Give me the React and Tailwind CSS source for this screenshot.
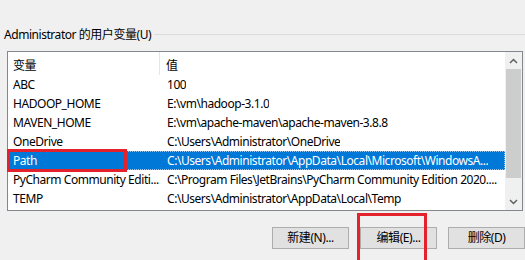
import React from 'react'

const rows = [
  ['ABC', '100'],
  ['HADOOP_HOME', 'E:\\vm\\hadoop-3.1.0'],
  ['MAVEN_HOME', 'E:\\vm\\apache-maven\\apache-maven-3.8.8'],
  ['OneDrive', 'C:\\Users\\Administrator\\OneDrive'],
  ['Path', 'C:\\Users\\Administrator\\AppData\\Local\\Microsoft\\WindowsA...'],
  ['PyCharm Community Editi...', 'C:\\Program Files\\JetBrains\\PyCharm Community Edition 2020....'],
  ['TEMP', 'C:\\Users\\Administrator\\AppData\\Local\\Temp'],
]

const Button = ({ children }) => (
  <div className="w-[77px] h-[22px] border border-[#adadad] bg-[#e1e1e1] flex items-center justify-center">
    {children}
  </div>
)

const App = () => {
  return (
    <div
      className="relative w-[525px] h-[260px] overflow-hidden bg-[#f0f0f0] text-[12px] tracking-[-0.45px] text-black"
      style={{ fontFamily: '"Noto Sans", "Noto Sans CJK SC", sans-serif' }}
    >
      <div className="flex items-center pt-[27px] h-[42px] pl-[4px]">
        <span className="leading-[14px] whitespace-nowrap">Administrator 的用户变量(U)</span>
        <div className="flex-1 ml-[3px] border-t border-[#dcdcdc]" />
      </div>

      <div className="ml-[7px] mt-[9px] w-[516px] h-[160px] border border-[#828790] bg-white flex">
        <div className="flex-1 min-w-0 overflow-hidden flex flex-col">
          <div className="flex h-[23px]">
            <div className="w-[152px] h-full flex items-center pt-[4px] pl-[5px] border-r border-[#e5e5e5]">变量</div>
            <div className="flex items-center pt-[4px] pl-[6px]">值</div>
          </div>
          {rows.map(([name, value]) => {
            const sel = name === 'Path'
            return (
              <div
                key={name}
                className={
                  sel
                    ? 'flex h-[19px] items-center bg-[#0078d7] text-white outline-1 outline-dotted outline-offset-[-1px] outline-[#9fc9ef]'
                    : 'flex h-[19px] items-center'
                }
              >
                <div className="w-[152px] shrink-0 pl-[5px] whitespace-nowrap overflow-hidden">{name}</div>
                <div className="pl-[7px] whitespace-nowrap overflow-hidden">{value}</div>
              </div>
            )
          })}
        </div>
        <div className="w-[17px] shrink-0 bg-[#f0f0f0] flex flex-col items-center">
          <div className="h-[17px] w-full flex items-center justify-center">
            <svg width="9" height="6" viewBox="0 0 9 6">
              <path d="M1 5 L4.5 1.5 L8 5" stroke="#606060" strokeWidth="1.5" fill="none" />
            </svg>
          </div>
          <div className="w-[15px] h-[109px] bg-[#cdcdcd]" />
          <div className="flex-1" />
          <div className="h-[17px] w-full flex items-center justify-center">
            <svg width="9" height="6" viewBox="0 0 9 6">
              <path d="M1 1 L4.5 4.5 L8 1" stroke="#606060" strokeWidth="1.5" fill="none" />
            </svg>
          </div>
        </div>
      </div>

      <div className="flex mt-[16px] pl-[272px] gap-[11px]">
        <Button>新建(N)...</Button>
        <Button>编辑(E)...</Button>
        <Button>删除(D)</Button>
      </div>

      <div className="absolute left-[7px] top-[149px] w-[120px] h-[23px] border-[3px] border-[#e3222b]" />
      <div className="absolute left-[357px] top-[213px] w-[70px] h-[52px] border-[3px] border-[#e3222b]" />
    </div>
  )
}

export default App
